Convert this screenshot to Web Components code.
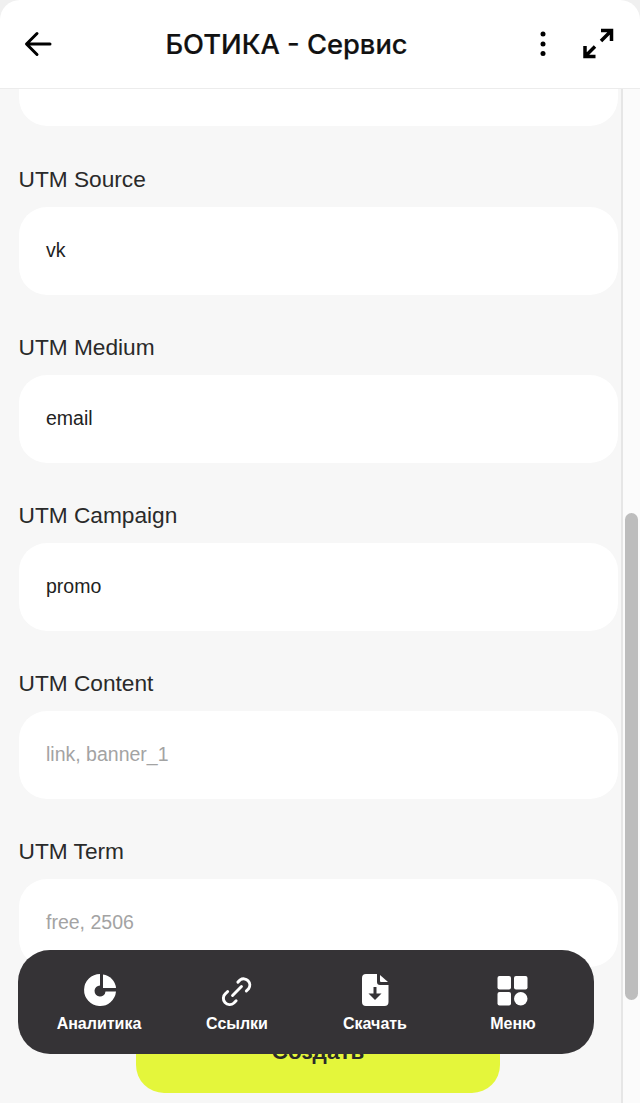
<!DOCTYPE html>
<html lang="ru"><head><meta charset="utf-8"><title>БОТИКА - Сервис</title>
<style>
html,body{margin:0;padding:0;height:100%;overflow:hidden;background:#fafafa;font-family:"Liberation Sans",Arial,sans-serif}
</style></head><body>
<template id="app-shell-t"><style>
:host{display:flex;flex-direction:column;width:640px;height:1103px;position:relative;overflow:hidden;background:#f0f0f0}
.row{display:flex;height:1093px;flex:none}
.pane{flex:none;display:flex;flex-direction:column;background:#f7f7f7;border-right:2px solid #e6e6e6;box-sizing:border-box;width:623px;overflow:hidden}
.track{flex:1;background:#fbfbfb;padding-top:425px;display:flex;justify-content:center}
.thumb{width:13px;height:487px;border-radius:7px;background:#bdbdbd}
.scroll{flex:1;overflow:hidden;display:flex;flex-direction:column;padding:0 3px 0 18.500px}
.h{height:10px;flex:none;background:#f2f2f2;padding-top:7px;box-sizing:border-box}
.hthumb{width:591px;height:3px;background:#bdbdbd;border-radius:3px 3px 0 0}
</style>
<slot name="header"></slot>
<div class="row"><div class="pane"><div class="scroll"><slot></slot></div></div><div class="track"><div class="thumb"></div></div></div>
<div class="h"><div class="hthumb"></div></div>
<slot name="overlay"></slot></template>

<template id="top-bar-t"><style>
:host{display:flex;align-items:center;justify-content:center;height:89px;flex:none;box-sizing:border-box;background:#fff;border-bottom:1px solid #ececec;border-radius:20px 20px 0 0;position:relative;margin-bottom:-1px;z-index:2;color:#111}
.t{font:500 27.300px/1 Inter,"Liberation Sans",sans-serif;margin-right:67px;padding-top:2px;white-space:nowrap;-webkit-text-stroke:.2px #111}
svg{position:absolute;fill:none;stroke:#000}
</style>
<svg style="left:22px;top:28px" width="32" height="32" viewBox="0 0 32 32" stroke-width="3" stroke-linecap="round" stroke-linejoin="round"><path d="M5 16H28M15 5.500 4.500 16 15 26.500"/></svg>
<span class="t"><slot></slot></span>
<svg style="left:534px;top:28px" width="18" height="32" viewBox="0 0 18 32"><g fill="#000" stroke="none"><circle cx="9" cy="6" r="2.500"/><circle cx="9" cy="16" r="2.500"/><circle cx="9" cy="25.500" r="2.500"/></g></svg>
<svg style="left:580px;top:25px" width="36" height="36" viewBox="0 0 36 36" stroke-width="3.500"><path d="M21 5.500H31.500V16M31 6 21 16M5 21V31.500H15.500M5.500 31 15 21.500"/></svg>
</template>

<template id="form-field-t"><style>
:host{display:flex;flex-direction:column;flex:none;margin-bottom:39px}
.l{font-size:22.700px;line-height:26px;height:26px;color:#2a2a2a;margin-bottom:15px;padding-top:1px;margin-top:-1px}
.i{height:88px;width:599.500px;box-sizing:border-box;border-radius:28px;background:#fff;padding:0 0 2px 27.500px;display:flex;align-items:center;font-size:19.500px;color:#222}
:host([placeholder]) .i{color:#a3a3a3}
</style><div class="l"><slot name="label"></slot></div><div class="i"><slot></slot></div></template>

<template id="stub-input-t"><style>
:host{display:block;flex:none;height:38px;width:599.500px;background:#fff;border-radius:0 0 28px 28px;margin-bottom:40px}
</style></template>

<template id="submit-button-t"><style>
:host{display:flex;align-items:center;justify-content:center;position:absolute;left:136px;top:1010px;width:364px;height:83px;border-radius:28px;background:#e4f63b;color:#2a2a2a;font:700 22.500px "Liberation Sans",sans-serif}
</style><slot></slot></template>

<template id="bottom-nav-t"><style>
:host{display:grid;grid-template-columns:repeat(4,1fr);position:absolute;left:18px;top:950px;width:576px;height:104px;padding:0 12px;box-sizing:border-box;background:#353336;border-radius:32px;z-index:3}
</style><slot></slot></template>

<template id="nav-item-t"><style>
:host{display:flex;flex-direction:column;align-items:center;color:#fff;font:700 16px/18px "Liberation Sans",sans-serif;padding-top:23px;box-sizing:border-box}
.ic{width:36px;height:36px;margin-bottom:6px;display:flex;align-items:center;justify-content:center}
</style><div class="ic"><slot name="icon"></slot></div><slot></slot></template>

<app-shell>
<top-bar slot="header">БОТИКА - Сервис</top-bar>
<stub-input></stub-input>
<form-field><span slot="label">UTM Source</span>vk</form-field>
<form-field><span slot="label">UTM Medium</span>email</form-field>
<form-field><span slot="label">UTM Campaign</span>promo</form-field>
<form-field placeholder><span slot="label">UTM Content</span>link, banner_1</form-field>
<form-field placeholder><span slot="label">UTM Term</span>free, 2506</form-field>
<submit-button slot="overlay">Создать</submit-button>
<bottom-nav slot="overlay">
<nav-item><svg slot="icon" width="36" height="36" viewBox="0 0 36 36"><path fill="#fff" d="M19 1A16 16 0 1 0 35 18.500H24.500A5.500 5.500 0 1 1 19 12.500Z"/><path fill="#fff" d="M22 1.500A15 15 0 0 1 35 15H22Z"/></svg>Аналитика</nav-item>
<nav-item><svg slot="icon" width="32" height="32" viewBox="0 0 36 36" fill="none" stroke="#fff" stroke-width="3.300" stroke-linecap="round"><path d="M13 23 23 13M19 8 21.500 5.500A7 7 0 0 1 31 15.500L28.500 18M17 29 14.500 31.500A7 7 0 0 1 5 21L7.500 18.500"/></svg>Ссылки</nav-item>
<nav-item><svg slot="icon" width="36" height="36" viewBox="0 0 36 36"><path fill="#fff" d="M9 1H20V9A3 3 0 0 0 23 12H31.500V29A4 4 0 0 1 27.500 33H9A4 4 0 0 1 5 29V5A4 4 0 0 1 9 1Z"/><path fill="#fff" d="M23 2 31 9H24A1 1 0 0 1 23 8Z"/><path fill="none" stroke="#353336" stroke-width="3" d="M18 14V23"/><path fill="#353336" d="M11.500 20.500H24.500L18 27Z"/></svg>Скачать</nav-item>
<nav-item><svg slot="icon" width="36" height="36" viewBox="0 0 36 36" fill="#fff"><rect x="2.500" y="3" width="13.500" height="13.500" rx="2"/><rect x="19" y="3" width="13.500" height="13.500" rx="2"/><rect x="2.500" y="19" width="13.500" height="13.500" rx="2"/><circle cx="25.750" cy="25.750" r="6.750"/></svg>Меню</nav-item>
</bottom-nav>
</app-shell>
<script>
const define=(name)=>{customElements.define(name,class extends HTMLElement{constructor(){super();this.attachShadow({mode:'open'}).appendChild(document.getElementById(name+'-t').content.cloneNode(true))}})};
['app-shell','top-bar','form-field','stub-input','submit-button','bottom-nav','nav-item'].forEach(n=>define(n));
</script>
</body></html>
